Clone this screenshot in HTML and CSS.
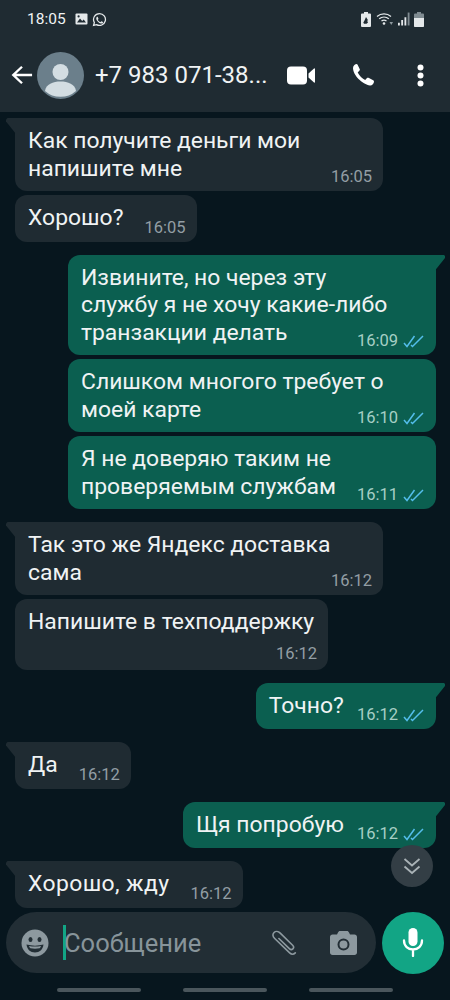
FILE: index.html
```html
<!DOCTYPE html>
<html lang="ru">
<head>
  <meta charset="UTF-8">
  <title>Чат</title>
  <link rel="stylesheet" href="styles.css">
</head>
<body>
  <header class="topbar">
    <div class="status">
      <span class="clock">18:05</span>
      <svg class="st-icon" width="13" height="12" viewBox="0 0 13 12"><rect x="0.5" y="0.5" width="12" height="11" rx="1" fill="#e4e8ea"/><path d="M2 9.500l3-4 2.200 2.400 1.500-1.400 2.300 3z" fill="#1f2b32"/><circle cx="3.600" cy="3.400" r="1.100" fill="#1f2b32"/></svg>
      <svg class="st-icon" width="15" height="15" viewBox="0 0 24 24"><path d="M12 2.500a9.500 9.500 0 0 0-8.200 14.300L2.500 21.500l4.800-1.250A9.500 9.500 0 1 0 12 2.500z" fill="none" stroke="#e4e8ea" stroke-width="2"/><path d="M8.700 7.500c-.3 0-.7.100-1 .5-.4.500-.9 1.200-.9 2.300 0 1.600 1.200 3.200 1.500 3.500.2.300 2.300 3.700 5.700 4.600 2 .5 3-.3 3.400-1 .3-.6.3-1.200.2-1.400l-2.300-1.200c-.3-.1-.5 0-.7.200l-.8 1c-.2.200-.4.200-.7.100-1.200-.5-2.800-1.700-3.700-3.400-.1-.3 0-.4.200-.6l.7-.9c.1-.2.1-.4 0-.6l-.9-2.200c-.2-.7-.4-.8-.7-.8z" fill="#e4e8ea"/></svg>
      <span class="spacer"></span>
      <svg class="st-icon" width="12" height="15" viewBox="0 0 11 15"><path d="M3.500 0h4v1.500h2a1 1 0 0 1 1 1V14a1 1 0 0 1-1 1h-8a1 1 0 0 1-1-1V2.500a1 1 0 0 1 1-1h2z" fill="#e4e8ea"/><path d="M5.500 5l2.200 3.600H6.500l1 1.800-1.500 1.400H3.500L2.800 10.500 4 8.500z" fill="#1f2b32"/></svg>
      <svg class="st-icon" width="18" height="14" viewBox="0 0 18 14"><g fill="none" stroke="#e4e8ea" stroke-width="1.300"><path d="M1 4.500C5 1 11 1 15 4.500"/><path d="M3.200 6.800c2.800-2.300 6.800-2.300 9.600 0"/><path d="M5.500 9c1.500-1.100 3.500-1.100 5 0"/></g><circle cx="8" cy="11.500" r="1.300" fill="#e4e8ea"/><path d="M13.500 10H17l-1.750 3z" fill="#8f9aa0"/></svg>
      <svg class="st-icon" width="12" height="14" viewBox="0 0 13 14"><path d="M0 11h2v3H0zM3.500 8h2v6h-2zM7 5h2v9H7z" fill="#e4e8ea"/><path d="M10.500 0h2v14h-2z" fill="#7f8b91"/></svg>
      <svg class="st-icon" width="10" height="15" viewBox="0 0 10 15"><path d="M3 0h4v1.500h2a1 1 0 0 1 1 1V14a1 1 0 0 1-1 1H1a1 1 0 0 1-1-1V2.500a1 1 0 0 1 1-1h2z" fill="#7f8b91"/><path d="M0 6h10v8a1 1 0 0 1-1 1H1a1 1 0 0 1-1-1z" fill="#e4e8ea"/></svg>
    </div>
    <div class="toolbar">
      <svg class="back" width="22" height="22" viewBox="0 0 24 22"><path d="M23 11H3M12 2l-9.500 9 9.500 9" fill="none" stroke="#fff" stroke-width="2.600"/></svg>
      <svg class="avatar" width="47" height="47" viewBox="0 0 47 47"><circle cx="23.500" cy="23.500" r="23.500" fill="#6b7f8b"/><circle cx="23.500" cy="20" r="8" fill="#d3dde2"/><path d="M8 39c1-7 8-9.500 15.500-9.500S38 32 39 39a23.500 23.500 0 0 1-31 0z" fill="#d3dde2"/></svg>
      <span class="contact">+7 983 071-38...</span>
      <svg class="video" width="28" height="19" viewBox="0 0 28 19"><rect x="0" y="0.500" width="20" height="18" rx="4" fill="#fff"/><path d="M21.500 7.500L27 2.500a.6.600 0 0 1 1 .5v13a.6.600 0 0 1-1 .5l-5.500-5z" fill="#fff"/></svg>
      <svg class="call" width="24" height="24" viewBox="0 0 24 24"><path d="M5.500 1C4.500 1 2 2.500 2 5c0 3.500 2.500 8 5.500 11s8 6 11.500 6.500c2 .2 4-2 4-4 0-.6-.3-1-.8-1.300l-4.700-2.400c-.6-.3-1.100-.1-1.500.3l-1.800 1.900c-2.800-1.200-6-4.500-7.500-7.500l1.800-1.900c.4-.4.500-.9.300-1.400L6.600 1.700C6.400 1.200 6 1 5.500 1z" fill="#fff"/></svg>
      <svg class="more" width="7" height="23" viewBox="0 0 7 23"><circle cx="3.500" cy="3.500" r="3" fill="#fff"/><circle cx="3.500" cy="11.500" r="3" fill="#fff"/><circle cx="3.500" cy="19.500" r="3" fill="#fff"/></svg>
    </div>
  </header>

  <main class="chat">
    <div class="msg in wide tail row">
      <p>Как получите деньги мои<br>напишите мне</p>
      <span class="meta">16:05</span>
    </div>
    <div class="msg in row one">
      <p>Хорошо?</p>
      <span class="meta">16:05</span>
    </div>

    <div class="msg out wide tail row gap-top">
      <p>Извините, но через эту<br>службу я не хочу какие-либо<br>транзакции делать</p>
      <span class="meta">16:09 <svg class="ticks" width="22" height="13" viewBox="0 0 22 13"><path d="M1 8l3 3.500L11.500 1M8 10l1.500 1.500L20 1" fill="none" stroke="#53bdeb" stroke-width="1.500"/></svg></span>
    </div>
    <div class="msg out wide row">
      <p>Слишком многого требует о<br>моей карте</p>
      <span class="meta">16:10 <svg class="ticks" width="22" height="13" viewBox="0 0 22 13"><path d="M1 8l3 3.500L11.500 1M8 10l1.500 1.500L20 1" fill="none" stroke="#53bdeb" stroke-width="1.500"/></svg></span>
    </div>
    <div class="msg out wide row">
      <p>Я не доверяю таким не<br>проверяемым службам</p>
      <span class="meta">16:11 <svg class="ticks" width="22" height="13" viewBox="0 0 22 13"><path d="M1 8l3 3.500L11.500 1M8 10l1.500 1.500L20 1" fill="none" stroke="#53bdeb" stroke-width="1.500"/></svg></span>
    </div>

    <div class="msg in wide tail row gap-top">
      <p>Так это же Яндекс доставка<br>сама</p>
      <span class="meta">16:12</span>
    </div>
    <div class="msg in stack">
      <p>Напишите в техподдержку</p>
      <span class="meta">16:12</span>
    </div>

    <div class="msg out tail row one gap-top">
      <p>Точно?</p>
      <span class="meta">16:12 <svg class="ticks" width="22" height="13" viewBox="0 0 22 13"><path d="M1 8l3 3.500L11.500 1M8 10l1.500 1.500L20 1" fill="none" stroke="#53bdeb" stroke-width="1.500"/></svg></span>
    </div>

    <div class="msg in tail row one gap-top">
      <p>Да</p>
      <span class="meta">16:12</span>
    </div>

    <div class="msg out tail row one gap-top">
      <p>Щя попробую</p>
      <span class="meta">16:12 <svg class="ticks" width="22" height="13" viewBox="0 0 22 13"><path d="M1 8l3 3.500L11.500 1M8 10l1.500 1.500L20 1" fill="none" stroke="#53bdeb" stroke-width="1.500"/></svg></span>
    </div>

    <div class="msg in tail row one loose gap-top">
      <p>Хорошо, жду</p>
      <span class="meta">16:12</span>
    </div>

    <button class="scroll-down">
      <svg width="20" height="20" viewBox="0 0 20 20"><path d="M2.500 3l7.500 6.500L17.500 3M2.500 10.500l7.500 6.500 7.500-6.500" fill="none" stroke="#a9b2b6" stroke-width="1.800"/></svg>
    </button>
  </main>

  <footer class="composer">
    <div class="field">
      <svg class="emoji" width="28" height="28" viewBox="0 0 28 28"><circle cx="14" cy="14" r="13.500" fill="#8d999f"/><ellipse cx="9.500" cy="10.500" rx="2" ry="2.500" fill="#222e35"/><ellipse cx="18.500" cy="10.500" rx="2" ry="2.500" fill="#222e35"/><path d="M5.500 15.500c5.500 1.500 11.500 1.500 17 0-.5 5-4 8-8.500 8s-8-3-8.500-8z" fill="#222e35"/><path d="M8 17c4 .7 8 .7 12 0-.3 1.300-1 2-1.500 2.300-3 .5-6 .5-9 0-.5-.3-1.200-1-1.500-2.300z" fill="#8d999f"/></svg>
      <span class="caret"></span>
      <span class="placeholder">Сообщение</span>
      <svg class="clip" width="28" height="26" viewBox="0 0 31 29"><path d="M27 25.500c-1.800 1.800-4.500 1.700-6.300 0L4 9.500C1.500 7 1.600 4.500 3.300 2.800s4.600-1.600 6.900.7L24 17c1.400 1.400 1.300 3 .3 4s-2.700 1-4-.3L8.700 9.500" fill="none" stroke="#8d999f" stroke-width="1.800" stroke-linecap="round"/></svg>
      <svg class="camera" width="27" height="24" viewBox="0 0 27 24"><path d="M8 1.500C8.400.6 9 0 10 0h7c1 0 1.600.6 2 1.500L20 3.500h4.500c1.400 0 2.500 1.100 2.500 2.500v15.500c0 1.400-1.100 2.500-2.500 2.500h-22C1.100 24 0 22.900 0 21.500V6c0-1.400 1.100-2.500 2.500-2.500H7z" fill="#8d999f"/><circle cx="13.500" cy="13.500" r="5" fill="none" stroke="#222e35" stroke-width="2"/></svg>
    </div>
    <div class="mic">
      <svg width="22" height="29" viewBox="0 0 22 29"><rect x="6.500" y="0" width="9" height="18" rx="4.500" fill="#fff"/><path d="M2 12.500c0 5.500 4 9 9 9s9-3.500 9-9M11 21.500V28" fill="none" stroke="#fff" stroke-width="2.300" stroke-linecap="round"/></svg>
    </div>
  </footer>

  <nav class="navbar">
    <span></span><span></span><span></span>
  </nav>
</body>
</html>
```

FILE: styles.css
```css
* {
  box-sizing: border-box;
}
html, body {
  margin: 0;
  height: 1000px;
}
body {
  width: 450px;
  overflow: hidden;
  display: flex;
  flex-direction: column;
  background-color: #07161e;
  font-family: Roboto, 'Noto Sans', sans-serif;
  color: #f0f3f4;
}

.topbar {
  height: 112px;
  background-color: #1f2b32;
  flex-shrink: 0;
}
.status {
  height: 38px;
  padding: 0 26px 0 27px;
  display: flex;
  align-items: center;
  gap: 4px;
}
.clock {
  font-size: 15.5px;
  margin-right: 5px;
}
.spacer {
  flex: 1;
}
.toolbar {
  height: 74px;
  display: flex;
  align-items: center;
  padding: 0 26px 0 11px;
}
.back {
  margin-right: 4px;
}
.avatar {
  margin-right: 11px;
}
.contact {
  font-size: 24px;
  width: 192px;
  white-space: nowrap;
}
.video {
  margin-right: 36px;
}
.call {
  margin-right: 42px;
}

.chat {
  flex: 1;
  position: relative;
  padding: 6px 14px 0 15px;
  display: flex;
  flex-direction: column;
  gap: 4px;
}
.msg {
  position: relative;
  padding: 9px 11px 9px 13px;
  border-radius: 12px;
  font-size: 22.9px;
  line-height: 27.5px;
}
.msg p {
  margin: 0;
  white-space: nowrap;
}
.in {
  align-self: flex-start;
  background-color: #1f2b32;
}
.out {
  align-self: flex-end;
  background-color: #0b5f50;
}
.wide {
  width: 368px;
}
.wide p {
  flex: 1;
  min-width: 0;
}
.row {
  display: flex;
  justify-content: space-between;
  gap: 21px;
}
.out.row {
  gap: 13px;
}
.one {
  padding-bottom: 10px;
}
.loose p {
  letter-spacing: 0.4px;
}
.stack {
  display: flex;
  flex-direction: column;
  padding: 9px 14px 6px 13px;
}
.stack .meta {
  margin: 8px -3px 0 0;
}
.gap-top {
  margin-top: 9px;
}
.meta {
  align-self: flex-end;
  flex-shrink: 0;
  font-size: 16.5px;
  line-height: 20px;
  margin-bottom: -5px;
  color: #939ea4;
  white-space: nowrap;
  display: flex;
  align-items: center;
  gap: 5px;
}
.one .meta {
  margin-bottom: -6px;
}
.out .meta {
  color: #a6cfc5;
}
.tail.in {
  border-top-left-radius: 0;
}
.tail.out {
  border-top-right-radius: 0;
}
.tail::before {
  content: "";
  position: absolute;
  top: 0;
  width: 10px;
  height: 16px;
  background-color: inherit;
}
.tail.in::before {
  left: -9px;
  clip-path: polygon(100% 0, 15% 0, 0 10%, 0 22%, 100% 100%);
}
.tail.out::before {
  right: -9px;
  clip-path: polygon(0 0, 85% 0, 100% 10%, 100% 22%, 0 100%);
}
.scroll-down {
  position: absolute;
  right: 17px;
  top: 733px;
  width: 42px;
  height: 42px;
  padding: 0;
  border: none;
  border-radius: 50%;
  background-color: #333e45;
  display: flex;
  align-items: center;
  justify-content: center;
}

.composer {
  flex-shrink: 0;
  display: flex;
  align-items: center;
  gap: 6px;
  padding: 0 6px;
  height: 67px;
}
.field {
  width: 370px;
  height: 61px;
  border-radius: 31px;
  background-color: #222e35;
  display: flex;
  align-items: center;
  padding: 0 19px 0 15px;
}
.caret {
  width: 3px;
  height: 35px;
  margin-left: 14px;
  background-color: #12a585;
}
.placeholder {
  flex: 1;
  margin-left: -2px;
  font-size: 25.5px;
  color: #87949a;
}
.clip {
  margin-right: 31px;
}
.mic {
  width: 62px;
  height: 62px;
  border-radius: 50%;
  background-color: #12a585;
  display: flex;
  align-items: center;
  justify-content: center;
}

.navbar {
  flex-shrink: 0;
  height: 24px;
  display: flex;
  justify-content: space-between;
  padding: 12px 57px 0;
}
.navbar span {
  width: 84px;
  height: 4px;
  border-radius: 2px;
  background-color: #4a565c;
}
```
